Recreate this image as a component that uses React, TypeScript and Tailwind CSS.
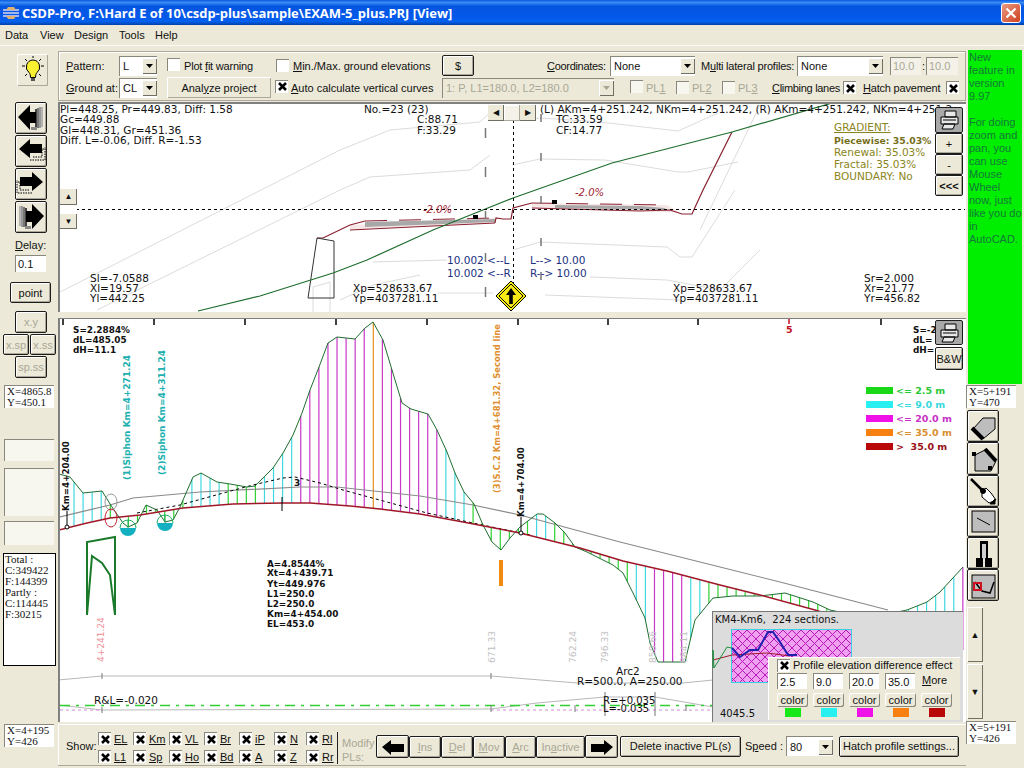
import type { ReactNode } from "react";

const raised =
  "border border-[#1c1c1c] rounded-[2px] bg-[#ece9d8] shadow-[inset_1px_1px_0_#fff,inset_-1px_-1px_0_#aca899]";
const sunken = "border-t border-l border-[#8a887c] bg-white";
const groove = "border-t border-l border-[#8a887c] bg-[#f7f6ef]";
const VERDANA = "'DejaVu Sans', sans-serif";

type Pt = [number, number];

const ground: Pt[] = [
  [59, 474], [70, 477], [83, 493], [102, 491], [112, 507], [123, 523], [128, 527], [137, 523], [146, 505],
  [157, 510], [165, 522], [173, 520], [180, 507], [193, 477], [201, 473], [217, 482], [230, 484], [247, 487],
  [255, 486], [273, 468], [283, 453], [293, 435], [302, 413], [310, 390], [319, 367], [328, 343], [337, 337],
  [355, 339], [365, 328], [373, 322], [383, 340], [392, 370], [402, 403], [411, 409], [428, 414], [437, 430],
  [447, 452], [455, 473], [464, 492], [474, 504], [483, 525], [492, 542], [501, 550], [510, 538], [520, 527],
  [537, 514], [543, 514], [555, 523], [565, 533], [575, 547], [587, 552], [613, 565], [623, 573], [633, 593],
  [645, 618], [650, 643], [658, 662], [685, 662], [695, 620], [713, 598], [733, 596], [760, 596], [785, 593],
  [813, 602], [830, 610], [868, 618], [907, 610], [927, 602], [940, 592], [963, 567],
];
const road: Pt[] = [
  [59, 530], [87, 523], [110, 518], [140, 515], [183, 508], [233, 504], [283, 503], [310, 503], [350, 506],
  [380, 509], [420, 514], [463, 522], [520, 533], [580, 548], [623, 561], [667, 571], [720, 585], [760, 595],
  [815, 610], [880, 630], [963, 650],
];

function at(line: Pt[], x: number) {
  for (let i = 1; i < line.length; i++) {
    if (x <= line[i][0]) {
      const [x0, y0] = line[i - 1];
      const [x1, y1] = line[i];
      return y0 + ((y1 - y0) * (x - x0)) / (x1 - x0);
    }
  }
  return line[line.length - 1][1];
}

function hatchColor(h: number) {
  if (h <= 22) return "#2fd02f";
  if (h <= 80) return "#40d8e0";
  if (h <= 180) return "#c838c8";
  return "#e09020";
}

function poly(line: Pt[]) {
  return line.map((p) => p.join(",")).join(" ");
}

function T({
  x,
  y,
  c = "#111",
  b,
  s = 10.5,
  rot,
  u,
  children,
}: {
  x: number;
  y: number;
  c?: string;
  b?: boolean;
  s?: number;
  rot?: boolean;
  u?: boolean;
  children: ReactNode;
}) {
  return (
    <text
      x={x}
      y={y}
      fill={c}
      fontSize={s}
      fontFamily={VERDANA}
      fontWeight={b ? 700 : 400}
      textDecoration={u ? "underline" : undefined}
      transform={rot ? `rotate(-90 ${x} ${y})` : undefined}
    >
      {children}
    </text>
  );
}

function Check({ on, off }: { on?: boolean; off?: boolean }) {
  return (
    <span className={`inline-flex h-[13px] w-[13px] shrink-0 items-center justify-center ${off ? groove : sunken}`}>
      {on ? (
        <svg width="11" height="11" viewBox="0 0 11 11">
          <path d="M2 2 9 9M9 2 2 9" stroke="#000" strokeWidth="2.6" />
        </svg>
      ) : null}
    </span>
  );
}

function Combo({ w, text, off }: { w: string; text: string; off?: boolean }) {
  return (
    <div className={`flex h-[20px] shrink-0 items-center justify-between ${w} ${off ? "border-t border-l border-[#8a887c] bg-[#ece9d8] text-[#a9a796]" : sunken}`}>
      <span className="pl-[3px]">{text}</span>
      <span className="flex h-[16px] w-[15px] items-center justify-center bg-[#ece9d8] shadow-[inset_1px_1px_0_#fff,inset_-1px_-1px_0_#716f64]">
        <svg width="7" height="4" viewBox="0 0 7 4">
          <path d="M0 0h7L3.500 4z" fill={off ? "#a9a796" : "#000"} />
        </svg>
      </span>
    </div>
  );
}

function ArrowIcon({ dir, kind }: { dir: "l" | "r"; kind: "fade" | "stair" }) {
  return (
    <svg width="30" height="30" viewBox="0 0 30 30" className={dir === "r" ? "-scale-x-100" : ""}>
      {kind === "fade" ? (
        <>
          <rect x="19" y="6" width="2" height="19" fill="#444" />
          <rect x="21" y="5" width="2" height="20" fill="#777" />
          <rect x="23" y="4" width="2" height="21" fill="#999" />
          <rect x="25" y="4" width="2" height="20" fill="#b4b4b4" />
          <rect x="15" y="24" width="6" height="3" fill="#888" />
          <path d="M2 14 14 2v7h6v11h-6v7z" fill="#000" />
        </>
      ) : (
        <>
          <path d="M17 21h9V13h2M14 24h15V11" fill="none" stroke="#000" strokeDasharray="1.500 1" />
          <path d="M3 13 14 3v5h12v9H14v5z" fill="#000" />
        </>
      )}
    </svg>
  );
}

function NavBtn({ dir, kind }: { dir: "l" | "r"; kind: "fade" | "stair" }) {
  return (
    <div className={`flex h-[32px] w-[32px] items-center justify-center ${raised}`}>
      <ArrowIcon dir={dir} kind={kind} />
    </div>
  );
}

function Coord({ a, b, cls = "" }: { a: string; b: string; cls?: string }) {
  return (
    <div className={`h-[23px] w-[50px] pl-[2px] font-['Liberation_Serif',serif] text-[11px] leading-[11px] ${sunken} ${cls}`}>
      <div>{a}</div>
      <div>{b}</div>
    </div>
  );
}

function SmallBtn({ label, cls = "" }: { label: string; cls?: string }) {
  return <div className={`flex items-center justify-center text-[#a9a796] ${raised} ${cls}`}>{label}</div>;
}

function LeftColumn() {
  return (
    <div className="flex w-[58px] shrink-0 flex-col">
      <div className="ml-[17px] mt-[8px] flex h-[32px] w-[31px] items-center justify-center rounded-[1px] bg-[#ece9d8] shadow-[inset_1px_1px_0_#fff,inset_-1px_-1px_0_#aca899]">
        <svg width="28" height="28" viewBox="0 0 28 28">
          <path d="M14 4a7 7 0 0 1 4 12.500c-1 1-1.500 3-1.500 5h-5c0-2-.5-4-1.500-5A7 7 0 0 1 14 4z" fill="#f8f030" stroke="#000" />
          <path d="M12 22h4v3h-4z" fill="#555" />
          <path d="M14 0v2M3 10h3M22 10h3M6 3l2 2M22 3l-2 2M6 20l2-2M22 20l-2-2" stroke="#000" />
        </svg>
      </div>
      <div className="ml-[15px] mt-[16px] flex flex-col gap-px">
        <NavBtn dir="l" kind="fade" />
        <NavBtn dir="l" kind="stair" />
        <NavBtn dir="r" kind="stair" />
        <NavBtn dir="r" kind="fade" />
      </div>
      <div className="ml-[15px] mt-[5px]">
        <u>D</u>elay:
      </div>
      <div className={`ml-[15px] mt-[3px] flex h-[17px] w-[31px] items-center pl-[2px] ${sunken}`}>0.1</div>
      <div className={`ml-[10px] mt-[10px] flex h-[21px] w-[41px] items-center justify-center ${raised}`}>point</div>
      <SmallBtn label="x.y" cls="ml-[15px] mt-[8px] h-[22px] w-[32px]" />
      <div className="ml-[3px] mt-px flex gap-px">
        <SmallBtn label="x.sp" cls="h-[21px] w-[26px]" />
        <SmallBtn label="x.ss" cls="h-[21px] w-[26px]" />
      </div>
      <SmallBtn label="sp.ss" cls="ml-[15px] mt-px h-[22px] w-[32px]" />
      <Coord a="X=4865.8" b="Y=450.1" cls="ml-[4px] mt-[7px]" />
      <div className={`ml-[4px] mt-[31px] h-[22px] w-[50px] ${groove}`} />
      <div className={`ml-[4px] mt-[7px] h-[48px] w-[50px] ${groove}`} />
      <div className={`ml-[4px] mt-[5px] h-[24px] w-[50px] ${groove}`} />
      <div className="ml-[3px] mt-[8px] h-[113px] w-[53px] border border-black bg-white pl-px font-['Liberation_Serif',serif] text-[11px] leading-[11px]">
        <div>Total :</div>
        <div>C:349422</div>
        <div>F:144399</div>
        <div>Partly :</div>
        <div>C:114445</div>
        <div>F:30215</div>
      </div>
      <Coord a="X=4+195" b="Y=426" cls="ml-[4px] mt-[58px]" />
    </div>
  );
}

function Toolbar() {
  return (
    <div className="mt-[5px] h-[50px] border border-[#aca899] pl-[7px] shadow-[inset_1px_1px_0_#fff]">
      <div className="mt-[3px] flex h-[21px] items-center">
        <span className="w-[53px]"><u>P</u>attern:</span>
        <Combo w="w-[38px]" text="L" />
        <span className="ml-[10px]"><Check /></span>
        <span className="ml-[4px] w-[92px] tracking-[-0.2px]">Plot <u>f</u>it warning</span>
        <Check />
        <span className="ml-[4px] w-[149px]"><u>M</u>in./Max. ground elevations</span>
        <div className={`flex h-[21px] w-[32px] items-center justify-center ${raised}`}>$</div>
        <span className="ml-[73px] w-[63px] tracking-[-0.3px]"><u>C</u>oordinates:</span>
        <Combo w="w-[85px]" text="None" />
        <span className="ml-[6px] w-[96px] tracking-[-0.2px]">M<u>u</u>lti lateral profiles:</span>
        <Combo w="w-[86px]" text="None" />
        <div className="ml-[7px] flex h-[18px] w-[31px] items-center border-t border-l border-[#8a887c] bg-[#f4f2e8] pl-[2px] text-[#a9a796]">10.0</div>
        <span className="w-[5px] text-center">:</span>
        <div className="flex h-[18px] w-[32px] items-center border-t border-l border-[#8a887c] bg-[#f4f2e8] pl-[2px] text-[#a9a796]">10.0</div>
      </div>
      <div className="mt-[1px] flex h-[21px] items-center">
        <span className="w-[53px]"><u>G</u>round at:</span>
        <Combo w="w-[38px]" text="CL" />
        <div className="ml-[10px] flex h-[21px] w-[104px] items-center justify-center bg-[#ece9d8] shadow-[inset_1px_1px_0_#fff,inset_-1px_-1px_0_#aca899]">
          Anal<u>y</u>ze project
        </div>
        <span className="ml-[4px]"><Check on /></span>
        <span className="ml-[3px] w-[151px]"><u>A</u>uto calculate vertical curves</span>
        <Combo w="w-[172px]" text="1: P, L1=180.0, L2=180.0" off />
        <span className="ml-[16px]"><Check off /></span>
        <span className="ml-[3px] w-[30px] text-[#a9a796]">PL<u>1</u></span>
        <Check off />
        <span className="ml-[3px] w-[30px] text-[#a9a796]">PL<u>2</u></span>
        <Check off />
        <span className="ml-[3px] w-[34px] text-[#a9a796]">PL<u>3</u></span>
        <span className="w-[71px] tracking-[-0.3px]"><u>C</u>limbing lanes</span>
        <Check on />
        <span className="ml-[7px] w-[83px] tracking-[-0.2px]"><u>H</u>atch pavement</span>
        <Check on />
      </div>
    </div>
  );
}

function CrossSection() {
  return (
    <svg width="908" height="210" viewBox="58 102 908 210" className="absolute inset-0">
      <g fill="none" stroke="#dcdcdc">
        <polyline points="60,292 340,150 390,130 480,122 495,108" />
        <polyline points="97,310 340,190 370,177 470,170 490,155" />
        <polyline points="512,120 540,118 600,122 678,131 718,113" />
        <polyline points="512,165 540,159 605,160 678,172 688,172 738,162" />
        <polyline points="513,250 540,242 667,247 680,257 692,257 735,190" />
        <polyline points="590,277 667,280 720,290 760,250" />
        <polyline points="373,262 447,260" />
        <polyline points="438,293 493,293" />
        <polyline points="313,312 313,287 330,282 330,312" />
        <polyline points="340,300 373,285 420,275" />
        <polyline points="545,295 680,300" />
        <polyline points="760,105 700,230" />
      </g>
      <path d="M350 225 495 218v5L350 230z" fill="#f7e6e6" />
      <path d="M365 222 495 219v3L365 227z" fill="#a8a8a8" />
      <path d="M532 203 667 205 680 213 640 211 532 208z" fill="#f7e6e6" />
      <path d="M555 205 640 206 665 208v2L555 208z" fill="#a8a8a8" />
      <polyline points="317,238 323,238 350,225 365,221" fill="none" stroke="#8a2030" strokeWidth="1.2" />
      <path d="M365 221 495 218" stroke="#8a2030" strokeDasharray="22 12" />
      <path d="M350 230 495 223" stroke="#8a2030" />
      <polyline
        points="495,223 496,218 503,219 511,219 513,208 532,203"
        fill="none"
        stroke="#8a2030"
        strokeWidth="1.2"
      />
      <path d="M532 203 667 205" stroke="#8a2030" strokeDasharray="22 12" />
      <polyline
        points="532,208 640,211 670,210 682,214 692,214 703,190 732,132"
        fill="none"
        stroke="#8a2030"
        strokeWidth="1.2"
      />
      <polygon points="317,238 334,241 334,298 308,298" fill="none" stroke="#333" />
      <polyline
        points="198,311 260,296 333,273 367,260 433,230 513,198 612,163 732,132 832,103"
        fill="none"
        stroke="#1e6e2e"
        strokeWidth="1.2"
      />
      <path d="M76 209.500H965M513.500 120V290" stroke="#000" strokeDasharray="3 3" />
      <path d="M473 215h5v4h-5zM552 200h5v4h-5z" fill="#000" />
      <path
        d="M485.500 128v10M485.500 167v10M485.500 211v8M485.500 253v9M485.500 287v10M541 114v8M541 153v8M541 196v8M541 238v8M541 272v8"
        stroke="#777"
        strokeWidth="1.500"
      />
      <T x={60} y={113}>Pl=448.25, Pr=449.83, Diff: 1.58</T>
      <T x={60} y={123}>Gc=449.88</T>
      <T x={60} y={133.5}>Gl=448.31, Gr=451.36</T>
      <T x={60} y={144}>Diff. L=-0.06, Diff. R=-1.53</T>
      <T x={364} y={113}>No.=23 (23)</T>
      <T x={417} y={123}>C:88.71</T>
      <T x={417} y={133.5}>F:33.29</T>
      <T x={540} y={113}>(L) AKm=4+251.242, NKm=4+251.242, (R) AKm=4+251.242, NKm=4+251.2</T>
      <T x={556} y={123}>TC:33.59</T>
      <T x={556} y={133.5}>CF:14.77</T>
      <T x={834} y={131} c="#8a8520" u>GRADIENT:</T>
      <T x={834} y={144} c="#77701a" b s={9.3}>Piecewise: 35.03%</T>
      <T x={834} y={156} c="#8a8520">Renewal: 35.03%</T>
      <T x={834} y={168} c="#8a8520">Fractal: 35.03%</T>
      <T x={834} y={180} c="#8a8520">BOUNDARY: No</T>
      <T x={90} y={282}>Sl=-7.0588</T>
      <T x={90} y={292}>Xl=19.57</T>
      <T x={90} y={302}>Yl=442.25</T>
      <T x={353} y={292}>Xp=528633.67</T>
      <T x={353} y={302}>Yp=4037281.11</T>
      <T x={673} y={292}>Xp=528633.67</T>
      <T x={673} y={302}>Yp=4037281.11</T>
      <T x={864} y={282}>Sr=2.000</T>
      <T x={864} y={292}>Xr=21.77</T>
      <T x={864} y={302}>Yr=456.82</T>
      <T x={447} y={264} c="#203080">10.002 &lt;--L</T>
      <T x={447} y={277} c="#203080">10.002 &lt;--R</T>
      <T x={530} y={264} c="#203080">L--&gt; 10.00</T>
      <T x={530} y={277} c="#203080">R--&gt; 10.00</T>
      <text x={423} y={213} fill="#a02030" fontSize={10} fontStyle="italic" fontFamily={VERDANA}>-2.0%</text>
      <text x={575} y={196} fill="#a02030" fontSize={10} fontStyle="italic" fontFamily={VERDANA}>-2.0%</text>
      <polygon points="511,281 526,296 511,311 496,296" fill="#f6e814" stroke="#000" />
      <polygon points="511,284 523,296 511,308 499,296" fill="none" stroke="#000" />
      <path d="M511 288 506 295h3.200v9h3.600v-9H516z" fill="#000" />
    </svg>
  );
}

function ProfileChart() {
  const stations = Array.from({ length: 99 }, (_, i) => 74 + i * 9.07);
  return (
    <svg width="908" height="404" viewBox="58 318 908 404" className="absolute inset-0">
      {[63, 154, 245, 336, 427, 518, 608, 698, 881].map((x) => (
        <path key={x} d={`M${x} 319v6`} stroke="#000" strokeWidth="1.500" />
      ))}
      <path d="M789 319v5" stroke="#c01020" strokeWidth="1.500" />
      <T x={786} y={333} c="#c01020" b s={9.500}>5</T>
      {stations.map((x) => {
        const g = at(ground, x);
        const r = at(road, x);
        return <line key={x} x1={x} x2={x} y1={g} y2={r} stroke={hatchColor(Math.abs(g - r))} strokeWidth="1.200" />;
      })}
      <polyline
        points={poly([[59, 517], [110, 505], [133, 498], [200, 492], [300, 487], [337, 487], [420, 496], [473, 505], [520, 515], [557, 525], [620, 542], [720, 567], [780, 582], [888, 610]])}
        fill="none"
        stroke="#8a8a8a"
        strokeWidth="1.200"
      />
      <polyline
        points={poly([[137, 513], [180, 505], [227, 492], [253, 485], [283, 478], [295, 477], [320, 483], [343, 490], [387, 502], [427, 513], [473, 523], [530, 535]])}
        fill="none"
        stroke="#000"
        strokeDasharray="3 3"
      />
      <polyline points={poly(ground)} fill="none" stroke="#1e6e2e" />
      <polyline points={poly(road)} fill="none" stroke="#a01828" strokeWidth="1.500" />
      <path d="M282 497v14" stroke="#000" />
      <ellipse cx="111" cy="502" rx="6" ry="8" fill="none" stroke="#999" />
      <ellipse cx="111" cy="518" rx="6" ry="9" fill="none" stroke="#c02030" />
      <path d="M120 528a8 8 0 0 0 16 0z" fill="#12b0c0" />
      <path d="M157 523a8 8 0 0 0 16 0z" fill="#12b0c0" />
      <path d="M120 528a8 8 0 0 1 16 0M157 523a8 8 0 0 1 16 0M128 520v8M165 515v8" fill="none" stroke="#20b060" />
      <circle cx="67" cy="527" r="2" fill="#fff" stroke="#000" />
      <circle cx="521" cy="533" r="2" fill="#fff" stroke="#000" />
      <path d="M67 525v-14M521 531v-14" stroke="#000" />
      <path d="M87 615V542L115 537V615L110 575 102 563 92 556z" fill="none" stroke="#1a7a2a" strokeWidth="2" />
      <path d="M501 560v26" stroke="#f08a10" strokeWidth="4" />
      <polyline points="58,680 102,676 491,676 577,683 683,683 713,680" fill="none" stroke="#b8b8b8" />
      <polyline points="58,705 102,710 491,709 537,703 605,697 655,697 713,707" fill="none" stroke="#b8b8b8" />
      <path d="M60 705.500H713" stroke="#30d030" strokeWidth="1.300" strokeDasharray="10 6 3 6" />
      <path d="M60 710H102M491 710H713" stroke="#d090d0" strokeDasharray="3 3" />
      <path d="M102 673v6M102 707v6M491 673v6M491 705v7M575 705v7M605 692v24M655 692v24M686 705v6" stroke="#777" />
      <T x={73} y={333} b s={8.900}>S=2.2884%</T>
      <T x={73} y={343} b s={8.900}>dL=485.05</T>
      <T x={73} y={353} b s={8.900}>dH=11.1</T>
      <T x={913} y={333} b s={8.900}>S=-2</T>
      <T x={913} y={343} b s={8.900}>dL=</T>
      <T x={913} y={353} b s={8.900}>dH=</T>
      <T x={69} y={511} b s={8.700} rot>Km=4+204.00</T>
      <T x={130} y={480} b s={9} c="#20b0b0" rot>(1)Siphon Km=4+271.24</T>
      <T x={165} y={475} b s={9} c="#20b0b0" rot>(2)Siphon Km=4+311.24</T>
      <T x={500} y={493} b s={8.400} c="#e09030" rot>(3)S.C.2 Km=4+681.32, Second line</T>
      <T x={524} y={517} b s={8.700} rot>Km=4+704.00</T>
      <T x={104} y={662} s={9} c="#f09098" rot>4+241.24</T>
      <T x={495} y={663} s={9.200} c="#c0c0c0" rot>671.33</T>
      <T x={576} y={663} s={9.200} c="#c0c0c0" rot>762.24</T>
      <T x={608} y={663} s={9.200} c="#c0c0c0" rot>796.33</T>
      <T x={656} y={663} s={9.200} c="#c0c0c0" rot>850.66</T>
      <T x={687} y={663} s={9.200} c="#c0c0c0" rot>884.11</T>
      <T x={294} y={486} b s={9}>3</T>
      <T x={267} y={567} b s={8.900}>A=4.8544%</T>
      <T x={267} y={576} b s={8.900}>Xt=4+439.71</T>
      <T x={267} y={586.500} b s={8.900}>Yt=449.976</T>
      <T x={267} y={596.500} b s={8.900}>L1=250.0</T>
      <T x={267} y={607} b s={8.900}>L2=250.0</T>
      <T x={267} y={616.500} b s={8.900}>Km=4+454.00</T>
      <T x={267} y={627} b s={8.900}>EL=453.0</T>
      <T x={94} y={704}>R&amp;L=-0.020</T>
      <T x={616} y={675}>Arc2</T>
      <T x={577} y={684.500}>R=500.0, A=250.00</T>
      <T x={603} y={703.500} s={10}>R=+0.035</T>
      <T x={603} y={712} s={10}>L=-0.035</T>
      {[
        { y: 387, c: "#18d818", tc: "#28c838", t: "<= 2.5 m" },
        { y: 401, c: "#28f0f0", tc: "#38d8e0", t: "<= 9.0 m" },
        { y: 415, c: "#f010e8", tc: "#c830c8", t: "<= 20.0 m" },
        { y: 429, c: "#f88010", tc: "#d89030", t: "<= 35.0 m" },
        { y: 443, c: "#b80808", tc: "#981018", t: ">  35.0 m" },
      ].map((row) => (
        <g key={row.y}>
          <rect x="866" y={row.y} width="27" height="7" fill={row.c} />
          <text x="896" y={row.y + 7} fontSize="9.500" fontWeight="700" fill={row.tc} fontFamily={VERDANA} xmlSpace="preserve">
            {row.t}
          </text>
        </g>
      ))}
    </svg>
  );
}

function MiniMap() {
  return (
    <div className="absolute left-[652px] top-[292px] h-[111px] w-[251px] bg-[#dcdcdc] shadow-[inset_1px_1px_0_#777]">
      <svg width="251" height="111" viewBox="712 611 251 111" className="absolute inset-0">
        <defs>
          <pattern id="cross" width="9" height="9" patternUnits="userSpaceOnUse">
            <rect width="9" height="9" fill="#f0a0f0" />
            <path d="M0 0 9 9M9 0 0 9" stroke="#b818b8" strokeWidth="1" />
          </pattern>
        </defs>
        <rect x="731.500" y="629.500" width="120" height="53" fill="url(#cross)" stroke="#38d0e0" />
        <polyline points="713,660 732,655 767,653 790,656" fill="none" stroke="#a01828" />
        <polyline points="713,668 713,650 714,668 727,647 732,648" fill="none" stroke="#1e8e3e" />
        <polyline points="732,648 740,657 750,650 758,650 768,632 773,632 780,642 788,655 797,655" fill="none" stroke="#2020b0" strokeWidth="2" />
        <text x="715" y="623" fontSize="10" fontFamily={VERDANA} fill="#111">KM4-Km6,&#160;&#160;224 sections.</text>
        <text x="720" y="717" fontSize="10" fontFamily={VERDANA} fill="#111">4045.5</text>
      </svg>
      <div className="absolute left-[56px] top-[46px] h-[63px] w-[192px] bg-[#ece9d8] pl-[9px] shadow-[inset_1px_1px_0_#fff]">
        <div className="flex h-[16px] items-center gap-[3px]">
          <Check on />
          <span>Profile elevation difference effect</span>
        </div>
        <div className="flex h-[17px] gap-[6px]">
          {["2.5", "9.0", "20.0", "35.0"].map((v) => (
            <div key={v} className={`flex h-[16px] w-[30px] items-center pl-[2px] ${sunken}`}>{v}</div>
          ))}
          <span className="ml-px"><u>M</u>ore</span>
        </div>
        <div className="mt-[3px] grid w-[180px] grid-cols-5">
          {["#18e818", "#28f0f0", "#f010e8", "#f88010", "#b80808"].map((c) => (
            <div key={c} className="flex flex-col items-start">
              <div className="flex h-[14px] w-[31px] items-center justify-center rounded-[2px] bg-[#ece9d8] shadow-[inset_1px_1px_0_#fff,inset_-1px_-1px_0_#8a887c]">color</div>
              <svg width="16" height="9" className="ml-[8px] mt-px"><rect width="16" height="9" fill={c} /></svg>
            </div>
          ))}
        </div>
      </div>
    </div>
  );
}

function BottomBar() {
  const toggles = [
    ["EL", "L1"], ["Km", "Sp"], ["VL", "Ho"], ["Br", "Bd"], ["iP", "A"], ["N", "Z"], ["Rl", "Rr"],
  ];
  return (
    <div className="mt-[2px] flex h-[42px] items-center border-b border-[#aca899] pl-[8px] shadow-[inset_1px_1px_0_#fff]">
      <span className="w-[32px] pt-[3px]">Show:</span>
      <div className="grid grid-cols-[35px_36px_35px_35px_35px_32px_31px] gap-y-[4px] pt-[6px]">
        {[0, 1].map((r) =>
          toggles.map((pair) => (
            <span key={pair[r]} className="flex items-center gap-[3px]">
              <Check on />
              <u>{pair[r]}</u>
            </span>
          )),
        )}
      </div>
      <div className="mt-[6px] h-[32px] w-[39px] border-l border-[#222] pl-[4px] pt-[4px] text-[#a9a796]">
        <div>Modify</div>
        <div>PLs:</div>
      </div>
      <div className="mt-[4px] flex h-[23px] items-center">
        <div className={`flex h-[23px] w-[33px] items-center justify-center ${raised}`}>
          <svg width="24" height="16" viewBox="0 0 24 16"><path d="M1 8 10 1v4h13v8H10v3z" fill="#000" /></svg>
        </div>
        {[
          { k: "I", r: "ns", w: "w-[32px]" },
          { k: "D", r: "el", w: "w-[32px]" },
          { k: "M", r: "ov", w: "w-[32px]" },
          { k: "A", r: "rc", w: "w-[31px]" },
        ].map((b) => (
          <div key={b.k} className={`flex h-[22px] items-center justify-center text-[#a9a796] ${raised} ${b.w}`}>
            <u>{b.k}</u>{b.r}
          </div>
        ))}
        <div className={`flex h-[22px] w-[49px] items-center justify-center text-[#a9a796] ${raised}`}>In<u>a</u>ctive</div>
        <div className={`flex h-[23px] w-[33px] items-center justify-center ${raised}`}>
          <svg width="24" height="16" viewBox="0 0 24 16"><path d="M23 8 14 1v4H1v8h13v3z" fill="#000" /></svg>
        </div>
      </div>
      <div className={`ml-[2px] mt-[3px] flex h-[21px] w-[121px] items-center justify-center ${raised}`}>Delete inactive PL(s)</div>
      <span className="ml-[4px] mt-[3px] w-[41px]">S<u>p</u>eed :</span>
      <div className="mt-[3px]"><Combo w="w-[47px]" text="80" /></div>
      <div className={`ml-[6px] mt-[3px] flex h-[21px] w-[120px] items-center justify-center ${raised}`}>Hatch profile settings...</div>
    </div>
  );
}

function Printer() {
  return (
    <svg width="21" height="20" viewBox="0 0 21 20" fill="#e8e8e8" stroke="#000">
      <path d="M6 1h11v6H6zM2 7h17v7H2zM5 14h11l-2 5H3z" />
      <path d="M4 10h13" />
    </svg>
  );
}

function CenterColumn() {
  return (
    <div className="w-[908px] shrink-0">
      <Toolbar />
      <div className="relative mt-[1px] h-[210px] overflow-hidden border-l-2 border-t-2 border-[#808080] bg-white">
        <div className="relative -left-[2px] -top-[2px]"><CrossSection /></div>
        <div className="absolute left-[428px] top-0 flex h-[18px] items-center">
          <div className="flex h-[16px] w-[16px] items-center justify-center bg-[#ece9d8] text-[8px] shadow-[inset_-1px_-1px_0_#716f64]">◀</div>
          <div className="h-[16px] w-[16px] bg-[#f4f2e8] shadow-[inset_-1px_-1px_0_#aca899,inset_1px_1px_0_#fff]" />
          <div className="flex h-[16px] w-[16px] items-center justify-center bg-[#ece9d8] text-[8px] shadow-[inset_-1px_-1px_0_#716f64]">▶</div>
        </div>
        <div className="absolute left-0 top-[85px] flex w-[17px] flex-col">
          <div className="flex h-[16px] items-center justify-center bg-[#ece9d8] text-[8px] shadow-[inset_-1px_-1px_0_#716f64]">▲</div>
          <div className="h-[9px] bg-white" />
          <div className="flex h-[15px] items-center justify-center bg-[#ece9d8] text-[8px] shadow-[inset_-1px_-1px_0_#716f64]">▼</div>
        </div>
        <div className="absolute right-[3px] top-[3px] flex w-[28px] flex-col">
          <div className="flex h-[26px] items-center justify-center rounded-[2px] border border-[#1c1c1c] bg-[#a8a8a8]"><Printer /></div>
          <div className={`flex h-[21px] items-center justify-center ${raised}`}>+</div>
          <div className={`flex h-[21px] items-center justify-center ${raised}`}>-</div>
          <div className={`flex h-[21px] items-center justify-center font-bold ${raised}`}>&lt;&lt;&lt;</div>
        </div>
      </div>
      <div className="relative mt-[6px] h-[404px] overflow-hidden border-l-2 border-t border-[#808080] bg-white">
        <div className="relative -left-[2px] -top-px"><ProfileChart /></div>
        <div className="absolute right-[3px] top-[1px] flex w-[28px] flex-col gap-[2px]">
          <div className="flex h-[25px] items-center justify-center rounded-[2px] border border-[#1c1c1c] bg-[#a8a8a8]"><Printer /></div>
          <div className={`flex h-[23px] items-center justify-center ${raised}`}>B&amp;W</div>
        </div>
        <MiniMap />
      </div>
      <BottomBar />
    </div>
  );
}

function RightColumn() {
  const icons = [
    <g key="a">
      <path d="M5 18 15 7H27V18L15 28z" fill="#bdbdbd" stroke="#000" />
      <path d="M4 17 15 28" stroke="#000" strokeWidth="4" />
    </g>,
    <g key="b">
      <path d="M7 11 17 6 28 17 23 27H7z" fill="#bdbdbd" stroke="#000" />
      <path d="M17 5 28 17" stroke="#000" strokeWidth="4" />
      <path d="M20 22h4v4h-4zM4 8h4v4H4z" fill="#000" />
    </g>,
    <g key="c" stroke="#000" fill="none">
      <path d="M3 3 15 15" strokeWidth="2.500" />
      <path d="M14 15l4-3 5 5 5 7-7 3-7-6z" fill="#fff" />
      <circle cx="15" cy="15" r="2.500" fill="#000" />
      <path d="M27 23v5h-5z" fill="#000" />
    </g>,
    <g key="d">
      <rect x="4" y="4" width="23" height="21" fill="#bdbdbd" stroke="#000" />
      <path d="M9 11 22 18" stroke="#000" />
    </g>,
    <g key="e">
      <rect x="12" y="3" width="8" height="18" fill="#000" />
      <rect x="14" y="6" width="4" height="15" fill="#cfcfcf" />
      <rect x="8" y="20" width="7" height="9" fill="#000" />
      <rect x="17" y="20" width="7" height="9" fill="#000" />
    </g>,
    <g key="f">
      <rect x="4" y="5" width="23" height="23" fill="#bdbdbd" stroke="#000" />
      <path d="M7 12 14 21 22 23 26 12" fill="none" stroke="#000" strokeWidth="1.500" />
      <rect x="6" y="13" width="7" height="7" fill="none" stroke="#d01020" strokeWidth="2" />
    </g>,
  ];
  const heights = ["h-[32px]", "h-[33px]", "h-[32px]", "h-[30px]", "h-[32px]", "h-[32px]"];
  return (
    <div className="flex w-[58px] shrink-0 flex-col">
      <div className="ml-[2px] mt-[4px] h-[334px] w-[54px] bg-[#00ee00] pl-px pt-[1px] text-[11px] leading-[13px] text-[#157a3a]">
        <div>New</div>
        <div>feature in</div>
        <div>version</div>
        <div>9.97</div>
        <div className="h-[13px]" />
        <div>For doing</div>
        <div>zoom and</div>
        <div>pan, you</div>
        <div>can use</div>
        <div>Mouse</div>
        <div>Wheel</div>
        <div>now, just</div>
        <div>like you do</div>
        <div>in</div>
        <div>AutoCAD.</div>
      </div>
      <Coord a="X=5+191" b="Y=470" cls="mt-[1px]" />
      <div className="ml-px mt-[2px] flex flex-col">
        {icons.map((ic, i) => (
          <div key={i} className={`flex w-[32px] items-center justify-center ${raised} ${heights[i]}`}>
            <svg width="30" height="30" viewBox="0 0 30 30">{ic}</svg>
          </div>
        ))}
      </div>
      <div className="ml-px mt-[6px] flex w-[16px] flex-col gap-[2px]">
        <div className="flex h-[55px] items-center justify-center bg-[#ece9d8] text-[9px] shadow-[inset_1px_1px_0_#fff,inset_-1px_-1px_0_#716f64]">▲</div>
        <div className="flex h-[55px] items-center justify-center bg-[#ece9d8] text-[9px] shadow-[inset_1px_1px_0_#fff,inset_-1px_-1px_0_#716f64]">▼</div>
      </div>
      <Coord a="X=5+191" b="Y=426" cls="mt-[2px]" />
    </div>
  );
}

export default function App() {
  return (
    <div className="flex h-[768px] w-[1024px] flex-col overflow-hidden whitespace-nowrap bg-[#ece9d8] font-['Liberation_Sans',sans-serif] text-[11px] leading-[14px] text-[#111]">
      <div className="flex h-[25px] shrink-0 items-center justify-between bg-[linear-gradient(180deg,#0a5ae0_0%,#3a8cf5_10%,#0455e0_25%,#0458ea_70%,#0262f0_85%,#0040ab_100%)] pl-[2px] pr-[3px]">
        <div className="flex items-center gap-[2px]">
          <svg width="18" height="16" viewBox="0 0 18 16">
            <path d="M1 5h16M1 8h16M1 11h16" stroke="#d8d8f0" strokeWidth="1.500" />
            <path d="M6 2h6l2 3H4zM4 11h10l-2 3H6z" fill="#e0b070" />
          </svg>
          <span className="font-['Open_Sans',sans-serif] text-[13px] font-bold tracking-[-0.05px] text-white">
            CSDP-Pro, F:\Hard E of 10\csdp-plus\sample\EXAM-5_plus.PRJ [View]
          </span>
        </div>
        <div className="flex h-[20px] w-[20px] items-center justify-center rounded-[3px] border border-[#fff] bg-[linear-gradient(135deg,#e89a80,#d04020)]">
          <svg width="12" height="12" viewBox="0 0 12 12"><path d="M1.500 1.500l9 9M10.500 1.500l-9 9" stroke="#fff" strokeWidth="2.200" /></svg>
        </div>
      </div>
      <div className="flex h-[21px] shrink-0 items-center border-b border-[#fbfaf4] pl-[5px]">
        <span className="w-[35px]">Data</span>
        <span className="w-[34px]">View</span>
        <span className="w-[45px]">Design</span>
        <span className="w-[36px]">Tools</span>
        <span>Help</span>
      </div>
      <div className="flex min-h-0 flex-1">
        <LeftColumn />
        <CenterColumn />
        <RightColumn />
      </div>
    </div>
  );
}
